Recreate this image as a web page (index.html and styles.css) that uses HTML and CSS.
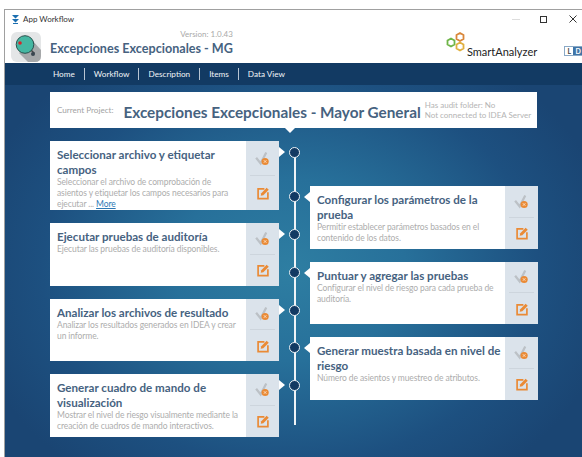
FILE: index.html
```html
<!DOCTYPE html>
<html lang="es">
<head>
<meta charset="utf-8">
<title>App Workflow</title>
<link rel="stylesheet" href="styles.css">
</head>
<body>
<svg class="sprites" width="0" height="0" aria-hidden="true">
  <symbol id="status" viewBox="0 0 20 20">
    <path d="M1.500 9l6 7.500L15 2" fill="none" stroke="#bcc1c6" stroke-width="3"/>
    <circle cx="13.500" cy="14" r="4.800" fill="#ea8a35"/>
    <path d="M11.800 12.300l3.400 3.400m0-3.400l-3.400 3.400" stroke="#fbe3cc" stroke-width="1.200"/>
  </symbol>
  <symbol id="edit" viewBox="0 0 20 20">
    <path d="M12 4H3v14h14V9" fill="none" stroke="#ea8a35" stroke-width="2.400"/>
    <path d="M7.500 10.200l7.700-7.700 3 3-7.700 7.700-3.800.8z" fill="#ea8a35"/>
  </symbol>
</svg>
<div class="window">
  <div class="titlebar">
    <svg class="app-icon" width="9" height="9" viewBox="0 0 9 9"><path d="M1 0h7L4.500 3.400zM1 4h7L4.500 7.600zM2 8h5v1H2z" fill="#1c6fb0"/></svg>
    <span class="app-name">App Workflow</span>
    <div class="controls">
      <span class="ctl-min"></span>
      <span class="ctl-max"></span>
      <svg class="ctl-close" width="8" height="8" viewBox="0 0 8 8"><path d="M.5.5l7 7m0-7l-7 7" stroke="#333" stroke-width="1"/></svg>
    </div>
  </div>
  <header class="app-header">
    <svg class="app-logo" width="30" height="30" viewBox="0 0 30 30">
      <rect width="30" height="30" rx="6" fill="#e4e6e7"/>
      <path d="M8 21l9 9h7q6 0 6-6v-6l-9-10z" fill="#a6a8aa"/>
      <path d="M20 18l3.500 3.500" stroke="#444" stroke-width="1.500"/>
      <circle cx="14" cy="12.500" r="8.800" fill="#45b7a2" stroke="#27504c" stroke-width="1"/>
      <circle cx="9" cy="11" r="1.800" fill="#d8232a"/>
      <circle cx="22" cy="22" r="2" fill="#3a4650"/>
    </svg>
    <div class="app-heading">
      <div class="version">Version: 1.0.43</div>
      <div class="app-title">Excepciones Excepcionales - MG</div>
    </div>
    <div class="brand">
      <svg class="brand-mark" width="22" height="22" viewBox="0 0 22 22" fill="none" stroke-width="1.800">
        <path d="M5 7.500l3.500 2v4l-3.500 2-3.500-2v-4z" stroke="#6fb548"/>
        <path d="M14 2l3.500 2v4L14 10l-3.500-2V4z" stroke="#d9873a"/>
        <path d="M14 11.500l3.500 2v4l-3.500 2-3.500-2v-4z" stroke="#e0b040"/>
      </svg>
      <span class="brand-name">SmartAnalyzer</span>
    </div>
    <div class="lang"><span class="lang-l">L</span><span class="lang-d">D</span></div>
  </header>
  <nav class="nav">
    <a class="nav-item">Home</a>
    <a class="nav-item">Workflow</a>
    <a class="nav-item">Description</a>
    <a class="nav-item">Items</a>
    <a class="nav-item">Data View</a>
  </nav>
  <main class="main">
    <section class="project">
      <span class="project-label">Current Project:</span>
      <span class="project-name">Excepciones Excepcionales - Mayor General</span>
      <div class="project-info">
        <div>Has audit folder: No</div>
        <div>Not connected to IDEA Server</div>
      </div>
    </section>
    <div class="board">
      <div class="column">
        <article class="card card-left">
          <div class="card-body">
            <h2>Seleccionar archivo y etiquetar campos</h2>
            <p>Seleccionar el archivo de comprobación de asientos y etiquetar los campos necesarios para ejecutar ... <a class="more">More</a></p>
          </div>
          <div class="card-actions">
            <div class="action"><svg width="15" height="15"><use href="#status"/></svg></div>
            <div class="action"><svg width="14" height="14"><use href="#edit"/></svg></div>
          </div>
        </article>
        <article class="card card-left">
          <div class="card-body">
            <h2>Ejecutar pruebas de auditoría</h2>
            <p>Ejecutar las pruebas de auditoría disponibles.</p>
          </div>
          <div class="card-actions">
            <div class="action"><svg width="15" height="15"><use href="#status"/></svg></div>
            <div class="action"><svg width="14" height="14"><use href="#edit"/></svg></div>
          </div>
        </article>
        <article class="card card-left">
          <div class="card-body">
            <h2>Analizar los archivos de resultado</h2>
            <p>Analizar los resultados generados en IDEA y crear un informe.</p>
          </div>
          <div class="card-actions">
            <div class="action"><svg width="15" height="15"><use href="#status"/></svg></div>
            <div class="action"><svg width="14" height="14"><use href="#edit"/></svg></div>
          </div>
        </article>
        <article class="card card-left">
          <div class="card-body">
            <h2>Generar cuadro de mando de visualización</h2>
            <p>Mostrar el nivel de riesgo visualmente mediante la creación de cuadros de mando interactivos.</p>
          </div>
          <div class="card-actions">
            <div class="action"><svg width="15" height="15"><use href="#status"/></svg></div>
            <div class="action"><svg width="14" height="14"><use href="#edit"/></svg></div>
          </div>
        </article>
      </div>
      <div class="timeline">
        <span class="dot"></span><span class="dot"></span><span class="dot"></span><span class="dot"></span><span class="dot"></span><span class="dot"></span><span class="dot"></span>
      </div>
      <div class="column column-right">
        <article class="card card-right">
          <div class="card-body">
            <h2>Configurar los parámetros de la prueba</h2>
            <p>Permitir establecer parámetros basados en el contenido de los datos.</p>
          </div>
          <div class="card-actions">
            <div class="action"><svg width="15" height="15"><use href="#status"/></svg></div>
            <div class="action"><svg width="14" height="14"><use href="#edit"/></svg></div>
          </div>
        </article>
        <article class="card card-right">
          <div class="card-body">
            <h2>Puntuar y agregar las pruebas</h2>
            <p>Configurar el nivel de riesgo para cada prueba de auditoría.</p>
          </div>
          <div class="card-actions">
            <div class="action"><svg width="15" height="15"><use href="#status"/></svg></div>
            <div class="action"><svg width="14" height="14"><use href="#edit"/></svg></div>
          </div>
        </article>
        <article class="card card-right">
          <div class="card-body">
            <h2>Generar muestra basada en nivel de riesgo</h2>
            <p>Número de asientos y muestreo de atributos.</p>
          </div>
          <div class="card-actions">
            <div class="action"><svg width="15" height="15"><use href="#status"/></svg></div>
            <div class="action"><svg width="14" height="14"><use href="#edit"/></svg></div>
          </div>
        </article>
      </div>
    </div>
  </main>
</div>
</body>
</html>
```
FILE: styles.css
```css
* { box-sizing: border-box; }

html, body {
  margin: 0;
  height: 100%;
  overflow: hidden;
  background: #fff;
}

body {
  padding: 9px 0 0 4px;
  font-family: Lato, "Open Sans", sans-serif;
}

.sprites { position: absolute; }

.window {
  height: 100%;
  display: flex;
  flex-direction: column;
  border-top: 1px solid #a0a0a0;
  border-left: 1px solid #a0a0a0;
}

/* Title bar */
.titlebar {
  height: 18px;
  flex: none;
  display: flex;
  align-items: center;
  padding-left: 6px;
  background: #fff;
}

.app-icon { margin-right: 3px; }

.app-name {
  font-size: 8px;
  color: #333;
}

.controls {
  margin-left: auto;
  display: flex;
  align-items: center;
  padding-right: 5px;
}

.ctl-min {
  width: 8px;
  height: 1px;
  background: #ddd;
  margin-right: 20px;
}

.ctl-max {
  width: 7px;
  height: 7px;
  border: 1px solid #333;
  margin-right: 22px;
}

/* Application header */
.app-header {
  height: 35px;
  flex: none;
  display: flex;
  align-items: flex-start;
  padding: 4px 0 0 6px;
  background: #fff;
}

.app-logo { flex: none; }

.app-heading {
  margin-left: 9px;
  width: 183px;
  text-align: right;
}

.version {
  font-size: 8px;
  line-height: 10px;
  margin-top: -3px;
  color: #a9a9a9;
}

.app-title {
  font-size: 12.600px;
  line-height: 20px;
  font-weight: 700;
  color: #46627f;
  text-align: left;
  white-space: nowrap;
}

.brand {
  margin-left: 213px;
  display: flex;
  margin-top: -1px;
}

.brand-name {
  font-size: 11px;
  line-height: 14px;
  margin: 14px 0 0 -1px;
  color: #222;
  white-space: nowrap;
}

.lang {
  display: flex;
  margin: 14px 0 0 27px;
  height: 10px;
  font-size: 7px;
  line-height: 9px;
  font-weight: 700;
  text-align: center;
  border: 1px solid #8aa9c6;
  border-right: 0;
}

.lang-l { width: 8px; background: #fff; color: #444; }
.lang-d { width: 10px; background: #3f74a6; color: #fff; }

/* Navigation */
.nav {
  height: 22px;
  flex: none;
  display: flex;
  align-items: center;
  padding-left: 48px;
  background: #123a63;
}

.nav-item {
  font-size: 8.200px;
  line-height: 12px;
  color: #f1f4f7;
  padding-right: 9px;
  margin-right: 9px;
  border-right: 1px solid #b8c5d3;
}

.nav-item:last-child { border-right: 0; }

/* Main area */
.main {
  flex: 1;
  padding: 7px 0 0 45px;
  background: radial-gradient(ellipse 330px 260px at 285px 185px, #2e7ea2 0%, #27709a 35%, #1d5080 75%, #1a4573 100%);
}

.project {
  position: relative;
  width: 487px;
  height: 36px;
  display: flex;
  align-items: center;
  padding-left: 7px;
  background: #fff;
}

.project::after {
  content: "";
  position: absolute;
  left: 235px;
  bottom: -5px;
  border-left: 5px solid transparent;
  border-right: 5px solid transparent;
  border-top: 5px solid #fff;
}

.project-label {
  font-size: 8.100px;
  color: #a2a2a2;
  margin-right: 10px;
  white-space: nowrap;
}

.project-name {
  font-size: 15.300px;
  font-weight: 700;
  color: #46627f;
  white-space: nowrap;
  margin-top: 3px;
}

.project-info {
  margin-left: 4px;
  font-size: 8px;
  line-height: 10.500px;
  color: #b4b4b4;
  white-space: nowrap;
}

/* Workflow board */
.board {
  display: flex;
  margin-top: 13px;
}

.column {
  width: 229px;
  display: flex;
  flex-direction: column;
  gap: 13px;
}

.column-right {
  width: 228px;
  margin-top: 45px;
}

.timeline {
  position: relative;
  width: 31px;
  height: 284px;
  display: flex;
  flex-direction: column;
  align-items: center;
  gap: 26.700px;
  padding-top: 5.500px;
}

.timeline::before {
  content: "";
  position: absolute;
  left: 14.500px;
  top: 11px;
  bottom: 0;
  width: 2px;
  background: #eef3f7;
}

.dot {
  position: relative;
  flex: none;
  width: 11px;
  height: 11px;
  border-radius: 50%;
  background: #123a63;
  border: 1.500px solid #eef3f7;
}

.dot:first-child { margin-bottom: 7.300px; }

.card {
  position: relative;
  display: flex;
  min-height: 62.600px;
  background: #fff;
}

.card::after {
  content: "";
  position: absolute;
  top: 6px;
  border-top: 5px solid transparent;
  border-bottom: 5px solid transparent;
}

.card-left::after {
  right: -6px;
  border-left: 6px solid #fff;
}

.card-right::after {
  left: -6px;
  border-right: 6px solid #fff;
}

.card-body {
  flex: 1;
  min-width: 0;
  padding: 6px 0 0 7px;
}

.card-body h2 {
  margin: 0;
  font-size: 11.600px;
  line-height: 15px;
  font-weight: 700;
  color: #46627f;
}

.card-body p {
  margin: 0;
  padding-right: 6px;
  font-size: 8.500px;
  line-height: 11px;
  letter-spacing: -.1px;
  color: #adadad;
}

.more {
  color: #2f79b5;
  text-decoration: underline;
}

.card-actions {
  flex: none;
  width: 33px;
  display: flex;
  flex-direction: column;
  padding: 0 4px;
  background: #dbe3eb;
}

.action {
  flex: 1;
  display: flex;
  align-items: center;
  justify-content: center;
}

.action + .action { border-top: 1px solid #cdd5dd; }
```
